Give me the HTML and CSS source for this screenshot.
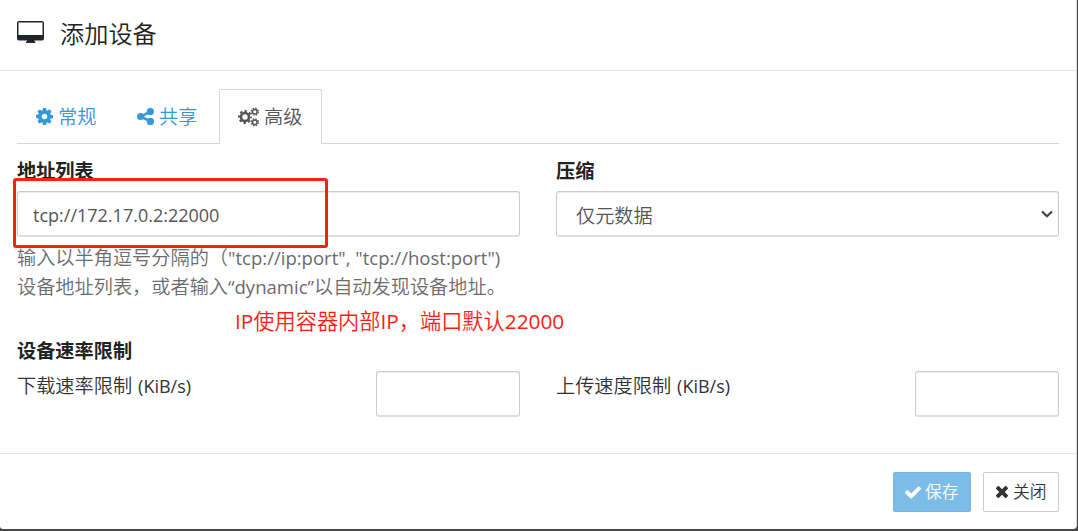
FILE: index.html
```html
<!DOCTYPE html>
<html lang="zh-CN">
<head>
<meta charset="utf-8">
<title>添加设备</title>
<link rel="stylesheet" href="styles.css">
</head>
<body>
<main class="modal">
  <header class="modal-header">
    <svg class="desktop-icon" viewBox="0 0 27 22"><path fill="currentColor" fill-rule="evenodd" d="M2 0h23a2 2 0 0 1 2 2v15.500a2 2 0 0 1-2 2h-7.500v1h.8V22H9v-1.500h1v-1H2a2 2 0 0 1-2-2V2a2 2 0 0 1 2-2zM1.500 1.500v12.500h24V1.500z"/></svg>
    <h1 class="title">添加设备</h1>
  </header>
  <section class="modal-body">
    <nav class="tabs">
      <a class="tab tab-general"><svg class="tab-icon" viewBox="128 128 1536 1536"><path fill="currentColor" d="M1152 896q0-106-75-181t-181-75-181 75-75 181 75 181 181 75 181-75 75-181zm512-109v222q0 12-8 23t-20 13l-185 28q-19 54-39 91 35 50 107 138 10 12 10 25t-9 23q-27 37-99 108t-94 71q-12 0-26-9l-138-108q-44 23-91 38-16 136-29 186-7 28-36 28h-222q-14 0-24.500-8.500t-11.500-21.500l-28-184q-49-16-90-37l-141 107q-10 9-25 9-14 0-25-11-126-114-165-168-7-10-7-23 0-12 8-23 15-21 51-66.500t54-70.500q-27-50-41-99l-183-27q-13-2-21-12.500t-8-23.500v-222q0-12 8-23t19-13l186-28q14-46 39-92-40-57-107-138-10-12-10-24 0-10 9-23 26-36 98.500-107.500t94.500-71.500q13 0 26 10l138 107q44-23 91-38 16-136 29-186 7-28 36-28h222q14 0 24.500 8.500t11.500 21.500l28 184q49 16 90 37l142-107q9-9 24-9 13 0 25 10 129 119 165 170 7 8 7 22 0 12-8 23-15 21-51 66.500t-54 70.500q26 50 41 98l183 28q13 2 21 12.500t8 23.500z"/></svg><span>常规</span></a>
      <a class="tab tab-share"><svg class="tab-icon" viewBox="0 0 17 17"><g fill="currentColor"><circle cx="3.600" cy="8.500" r="3.600"/><circle cx="13.400" cy="3.600" r="3.600"/><circle cx="13.400" cy="13.400" r="3.600"/></g><path d="M13.400 3.600 3.600 8.500l9.800 4.900" fill="none" stroke="currentColor" stroke-width="2.600"/></svg><span>共享</span></a>
      <a class="tab tab-advanced active"><svg class="cogs-icon" viewBox="0 0 21 20"><g fill="none" stroke="currentColor">
        <circle cx="7" cy="10" r="4" stroke-width="2.600"/><circle cx="7" cy="10" r="5.900" stroke-width="2" stroke-dasharray="2.400 2.234" stroke-dashoffset="1.200"/>
        <circle cx="16.800" cy="4.700" r="2.300" stroke-width="1.500"/><circle cx="16.800" cy="4.700" r="3.500" stroke-width="1.300" stroke-dasharray="1.600 1.149"/>
        <circle cx="16.800" cy="15.300" r="2.300" stroke-width="1.500"/><circle cx="16.800" cy="15.300" r="3.500" stroke-width="1.300" stroke-dasharray="1.600 1.149"/></g></svg><span>高级</span></a>
    </nav>
    <div class="columns">
      <div class="field">
        <label class="label">地址列表</label>
        <div class="control"><span class="address">tcp://172.17.0.2:22000</span></div>
        <p class="help">输入以半角逗号分隔的（<span class="help-latin">"tcp://ip:port", "tcp://host:port")</span><br>设备地址列表，或者输入<span class="help-latin">“dynamic”</span>以自动发现设备地址。</p>
      </div>
      <div class="field">
        <label class="label">压缩</label>
        <div class="control select"><span>仅元数据</span><svg class="chevron" viewBox="0 0 12 8"><path d="M1 1.500 6 6.300l5-4.800" fill="none" stroke="#444" stroke-width="2.200"/></svg></div>
      </div>
    </div>
    <h2 class="label rates-title">设备速率限制</h2>
    <div class="columns">
      <div class="rate"><span class="rate-name">下载速率限制 <span class="unit">(KiB/s)</span></span><div class="control rate-input"></div></div>
      <div class="rate"><span class="rate-name">上传速度限制 <span class="unit">(KiB/s)</span></span><div class="control rate-input"></div></div>
    </div>
  </section>
  <footer class="modal-footer">
    <button class="button save"><svg class="check" viewBox="121 334 1550 1188"><path fill="currentColor" d="M1671 566q0 40-28 68l-724 724-136 136q-28 28-68 28t-68-28l-136-136-362-362q-28-28-28-68t28-68l136-136q28-28 68-28t68 28l294 295 656-657q28-28 68-28t68 28l136 136q28 28 28 68z"/></svg><span>保存</span></button>
    <button class="button close"><svg class="times" viewBox="302 366 1188 1188"><path fill="currentColor" d="M1490 1322q0 40-28 68l-136 136q-28 28-68 28t-68-28l-294-294-294 294q-28 28-68 28t-68-28l-136-136q-28-28-28-68t28-68l294-294-294-294q-28-28-28-68t28-68l136-136q28-28 68-28t68 28l294 294 294-294q28-28 68-28t68 28l136 136q28 28 28 68t-28 68l-294 294 294 294q28 28 28 68z"/></svg><span>关闭</span></button>
  </footer>
  <div class="highlight"></div>
  <div class="note"><span class="note-latin">IP</span>使用容器内部<span class="note-latin">IP</span>，端口默认<span class="note-latin">22000</span></div>
</main>
</body>
</html>
```
FILE: styles.css
```css
* { box-sizing: border-box; }
body { margin: 0; background: #484848; font-family: "Open Sans", "Noto Sans CJK SC", sans-serif; font-weight: 350; font-size: 19.2px; color: #212529; }
.modal { position: relative; width: 1077px; height: 529px; background: #fff; border-right: 1px solid #ddd; border-radius: 0 0 4px 3px; display: flex; flex-direction: column; white-space: nowrap; }
.modal-header { height: 71px; flex: none; display: flex; align-items: flex-start; gap: 16px; padding: 21px 17px 0; border-bottom: 1px solid #e3e3e3; }
.desktop-icon { width: 27px; height: 22px; }
.title { margin: -1px 0 0; font-size: 24.2px; line-height: 28px; font-weight: 350; color: #222; }
.modal-body { height: 382px; flex: none; padding: 18px 17px 0; }
.tabs { display: flex; height: 55px; border-bottom: 1px solid #d7d7d7; }
.tab { display: flex; align-items: center; gap: 5px; height: 55px; color: #3498db; line-height: 28px; }
.tab-general { width: 101px; padding-left: 19px; }
.tab-share { width: 101px; padding-left: 19px; }
.tab-icon { width: 17px; height: 17px; }
.tab-advanced { width: 103px; padding-left: 18px; border: 1px solid #d7d7d7; border-bottom: 0; border-radius: 2px 2px 0 0; background: #fff; color: #555; }
.cogs-icon { width: 21px; height: 20px; }
.columns { display: grid; grid-template-columns: 503px 503px; column-gap: 36px; }
.field { height: 193px; padding-top: 13px; }
.label { display: block; height: 28px; line-height: 28px; font-weight: 700; font-size: 19.2px; color: #222; }
.control { height: 46px; display: flex; align-items: center; padding: 0 15px; margin-top: 6px; border: 1px solid #ccc; border-bottom: 2px solid #dedede; border-radius: 3px; background: #fff; box-shadow: inset 0 1px 1px #00000013; color: #555; }
.address { font-size: 18px; font-weight: 400; line-height: 28px; padding-top: 3px; }
.select { justify-content: space-between; padding: 2px 5px 0 19px; }
.chevron { width: 12px; height: 8px; margin-bottom: 2px; }
.help { margin: 7px 0 0; line-height: 28.5px; color: #6b6b6b; }
.help-latin { font-size: 18.55px; font-weight: 400; }
.rates-title { margin: 0; }
.rate { display: flex; justify-content: space-between; line-height: 28px; padding-top: 6px; color: #333; }
.rate-name { padding-top: 1px; }
.rate-input { width: 144px; margin-top: 0; }
.unit { font-size: 18px; font-weight: 400; margin-left: 1px; }
.modal-footer { height: 76px; display: flex; justify-content: flex-end; gap: 12px; padding: 18px 17px 0; border-top: 1px solid #e5e5e5; }
.button { height: 40px; display: flex; align-items: center; padding: 0 11px; border: 1px solid #ccc; border-radius: 2px; background: #fff; color: #333; font: inherit; font-size: 16.8px; line-height: 26px; }
.save { width: 78px; gap: 4px; background: #7cbce7; border-color: #75b5e1; color: #fff; }
.close { width: 76px; gap: 5px; padding-left: 12px; }
.check { width: 16px; height: 13px; }
.times { width: 12px; height: 12px; }
.highlight { position: absolute; left: 13px; top: 178px; width: 315px; height: 70px; border: 3px solid #ff2015; border-radius: 3px; }
.note { position: absolute; left: 235px; top: 305px; font-size: 21.2px; line-height: 32px; color: #ff1b12; }
.note-latin { font-size: 20.8px; font-weight: 400; }
```
